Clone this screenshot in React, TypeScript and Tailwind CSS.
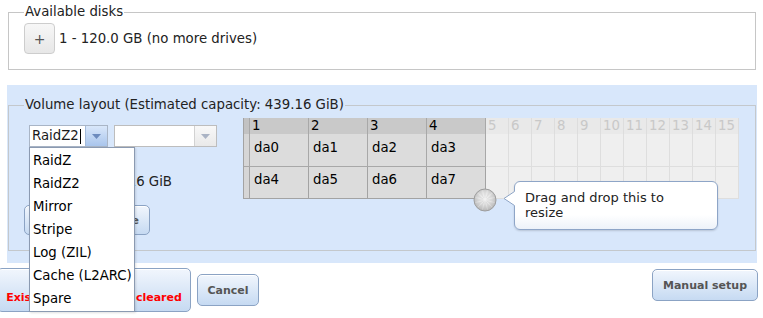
import React from "react";

const blueBtn =
  "rounded-[5px] border border-[#8ba3c4] bg-[linear-gradient(to_bottom,#f1f6fd,#c6daf2)] shadow-[inset_0_1px_0_#ffffff] text-[11px] font-bold text-[#555555] leading-[15px] flex items-center justify-center";

function Knob() {
  const lines = [];
  for (let i = 0; i < 24; i++) {
    const a = (i * Math.PI * 2) / 24;
    lines.push(
      <line
        key={i}
        x1={12 + Math.cos(a) * 2}
        y1={12 + Math.sin(a) * 2}
        x2={12 + Math.cos(a) * 10}
        y2={12 + Math.sin(a) * 10}
        stroke={i % 2 ? "#f4f4f4" : "#c8c8c8"}
        strokeWidth="0.6"
        opacity="0.5"
      />
    );
  }
  return (
    <svg width="24" height="24" viewBox="0 0 24 24">
      <defs>
        <radialGradient id="kg" cx="50%" cy="42%" r="58%">
          <stop offset="0" stopColor="#f6f6f6" />
          <stop offset="0.5" stopColor="#dedede" />
          <stop offset="1" stopColor="#b4b4b4" />
        </radialGradient>
      </defs>
      <circle cx="12" cy="12" r="11" fill="url(#kg)" />
      {lines}
      <circle cx="12" cy="12" r="11" fill="none" stroke="#9e9e9e" strokeWidth="1" />
    </svg>
  );
}

function Tri({ color }: { color: string }) {
  return (
    <svg width="9" height="5" viewBox="0 0 9 5">
      <polygon points="0,0 9,0 4.5,5" fill={color} />
    </svg>
  );
}

export default function App() {
  const active = [
    { h: "1", a: "da0", b: "da4" },
    { h: "2", a: "da1", b: "da5" },
    { h: "3", a: "da2", b: "da6" },
    { h: "4", a: "da3", b: "da7" },
  ];
  const inactive = [5, 6, 7, 8, 9, 10, 11, 12, 13, 14, 15];
  const menu = ["RaidZ", "RaidZ2", "Mirror", "Stripe", "Log (ZIL)", "Cache (L2ARC)", "Spare"];

  return (
    <div className="relative w-[763px] h-[318px] overflow-hidden bg-white font-['DejaVu_Sans',sans-serif] text-[13.3px] leading-[16px] text-[#1a1a1a]">
      {/* Available disks */}
      <div className="pt-[4px] pl-[8px]">
        <fieldset className="w-[748px] border border-[#c6c6c6] pl-[15px] pb-[15px]">
          <legend className="px-[1px] text-[13.3px] leading-[16px] text-[#222]">Available disks</legend>
          <div className="mt-[3px] flex items-center gap-[4px]">
            <div className="w-[31px] h-[31px] rounded-[4px] border border-[#cdcdcd] bg-[linear-gradient(to_bottom,#f7f7f7,#e7e7e7)] flex items-center justify-center text-[14px] text-[#555]">
              +
            </div>
            <span className="text-[#222]">1 - 120.0 GB (no more drives)</span>
          </div>
        </fieldset>
      </div>

      {/* Volume layout */}
      <div className="mt-[15px] ml-[7px] w-[750px] bg-[#d8e7fb] pt-[12px] pb-[12px]">
        <fieldset className="ml-[1px] w-[748px] border border-[#c4c8cc] pl-[15px] pb-[15px]">
          <legend className="px-[1px] text-[13.3px] leading-[16px] text-[#222]">
            Volume layout (Estimated capacity: 439.16 GiB)
          </legend>
          <div className="flex items-start">
            <div className="w-[219px] mt-[12px] flex flex-col">
              <div className="ml-[5px] flex gap-[6px]">
                <div className="w-[79px] h-[22px] border border-[#a9b5c6] bg-white flex">
                  <div className="flex-1 flex items-center pl-[2px] text-[13.3px]">
                    <span>RaidZ2</span>
                    <span className="ml-[1px] w-[1px] h-[15px] bg-black" />
                  </div>
                  <div className="w-[22px] h-full border-l border-[#a4bbdb] bg-[linear-gradient(to_bottom,#d9e7fa,#a9c5ec)] flex items-center justify-center">
                    <Tri color="#6d8bbd" />
                  </div>
                </div>
                <div className="w-[103px] h-[22px] border border-[#bdbdbd] bg-white flex">
                  <div className="flex-1" />
                  <div className="w-[22px] h-full border-l border-[#d2d2d2] bg-[linear-gradient(to_bottom,#f8f8f8,#e9e9e9)] flex items-center justify-center">
                    <Tri color="#aab3c4" />
                  </div>
                </div>
              </div>
              <div className="mt-[27px] w-[148px] h-[16px] text-right whitespace-nowrap text-[#222]">
                Capacity: 439.16 GiB
              </div>
              <div className={`mt-[15px] w-[126px] h-[30px] overflow-hidden ${blueBtn} !justify-end pr-[10px] whitespace-nowrap`}>
                Add Extra Device
              </div>
            </div>

            {/* Disk grid */}
            <div className="mt-[5px] flex">
              <div className="flex flex-col border-l border-[#a3a3a3]">
                <div className="h-[16px] w-[6px] bg-[#c2c2c2] border-r border-[#a8a8a8]" />
                <div className="h-[33px] w-[6px] bg-[#d6d6d6] border-r border-b border-[#a8a8a8]" />
                <div className="h-[32px] w-[6px] bg-[#d6d6d6] border-r border-b border-[#a3a3a3]" />
              </div>
              {active.map((c) => (
                <div key={c.h} className="flex flex-col w-[59px]">
                  <div className="h-[16px] bg-[#c9c9c9] border-r border-[#a8a8a8] pl-[2px] leading-[16px] text-black">
                    {c.h}
                  </div>
                  <div className="h-[33px] bg-[#dcdcdc] border-r border-b border-[#a8a8a8] pl-[4px] pt-[6px] text-black">
                    {c.a}
                  </div>
                  <div className="h-[32px] bg-[#dcdcdc] border-r border-b border-[#a3a3a3] pl-[4px] pt-[5px] text-black">
                    {c.b}
                  </div>
                </div>
              ))}
              {inactive.map((n) => (
                <div key={n} className="flex flex-col w-[23px]">
                  <div className="h-[16px] bg-[#e9e9e9] border-r border-[#dddddd] pl-[2px] leading-[16px] text-[#c8c8c8]">
                    {n}
                  </div>
                  <div className="h-[33px] bg-[#efefef] border-r border-b border-[#dedede]" />
                  <div className="h-[32px] bg-[#efefef] border-r border-b border-[#dedede]" />
                </div>
              ))}
            </div>
          </div>
        </fieldset>
      </div>

      {/* Bottom buttons */}
      <div className="mt-[5px] flex items-start">
        <div className={`ml-[-3px] w-[194px] h-[44px] ${blueBtn} flex-col`}>
          <span className="text-[11px]">Add Volume</span>
          <span className="text-[11px] text-[#ff0000]">Existing data will be cleared</span>
        </div>
        <div className={`ml-[6px] mt-[6px] w-[62px] h-[32px] ${blueBtn}`}>Cancel</div>
        <div className="flex-1" />
        <div className={`mt-[1px] mr-[5px] w-[106px] h-[32px] ${blueBtn}`}>Manual setup</div>
      </div>

      {/* Knob */}
      <div className="absolute left-[473px] top-[188px]">
        <Knob />
      </div>

      {/* Tooltip */}
      <div className="absolute left-[514px] top-[181px] w-[204px] h-[49px] rounded-[6px] border border-[#8ea5c7] bg-[linear-gradient(to_bottom,#ffffff_70%,#edf2f9)] shadow-[0_1px_2px_rgba(0,0,0,0.15)] pl-[10px] pt-[8px] text-[13px] leading-[15px] text-[#222]">
        Drag and drop this to
        <br />
        resize
      </div>
      <svg className="absolute left-[503px] top-[190px]" width="13" height="17" viewBox="0 0 13 17">
        <polygon points="13,0.5 1,8.5 13,16.5" fill="#ffffff" />
        <path d="M11.5 1.5 L1 8.5 L11.5 15.5" fill="none" stroke="#8ea5c7" strokeWidth="1" />
      </svg>

      {/* Dropdown menu */}
      <div className="absolute left-[29px] top-[147px] w-[106px] h-[165px] border border-[#8b9ab1] bg-white pt-[1px] shadow-[1px_1px_2px_rgba(0,0,0,0.12)]">
        {menu.map((m) => (
          <div key={m} className="h-[23px] pl-[3px] flex items-center text-[13.3px] text-black whitespace-nowrap">
            {m}
          </div>
        ))}
      </div>
    </div>
  );
}
